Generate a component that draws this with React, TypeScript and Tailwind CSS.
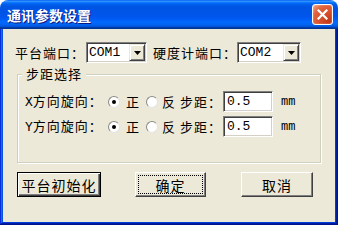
import React from "react";

function Radio({ checked }: { checked: boolean }) {
  return (
    <span className="relative inline-block w-[12px] h-[12px] shrink-0 rounded-full bg-white border border-t-[#8a8a8a] border-l-[#8a8a8a] border-b-[#e4e4e4] border-r-[#e4e4e4]">
      {checked && <span className="absolute left-[3px] top-[3px] w-[4px] h-[4px] rounded-full bg-black" />}
    </span>
  );
}

function DropBtn() {
  return (
    <div className="w-[16px] h-full flex items-center justify-center bg-[#ece9d8] border border-t-[#ece9d8] border-l-[#ece9d8] border-b-[#404040] border-r-[#404040] shadow-[inset_1px_1px_#ffffff,inset_-1px_-1px_#808080]">
      <svg width="7" height="4" viewBox="0 0 7 4">
        <polygon points="0,0 7,0 3.5,4" fill="#000" />
      </svg>
    </div>
  );
}

function Combo({ value, cls }: { value: string; cls: string }) {
  return (
    <div className={cls}>
      <div className="flex-1 h-full flex items-center pl-[1px] font-['Liberation_Mono',monospace] text-[13px] leading-none text-black">
        {value}
      </div>
      <DropBtn />
    </div>
  );
}

function Row({ axis }: { axis: string }) {
  return (
    <div className="flex items-center h-[21px] text-[13px] tracking-[1px] text-black">
      <span className="w-[83px] shrink-0 whitespace-nowrap">
        <span className="font-['Liberation_Mono',monospace] text-[13px] tracking-[0px]">{axis}</span>方向旋向：
      </span>
      <Radio checked />
      <span className="ml-[6px] w-[14px] shrink-0">正</span>
      <span className="ml-[6px] flex"><Radio checked={false} /></span>
      <span className="ml-[4px] w-[14px] shrink-0">反</span>
      <span className="ml-[4px] w-[42px] shrink-0 whitespace-nowrap">步距：</span>
      <div className="ml-[1px] w-[50px] h-[21px] shrink-0 bg-white border border-t-[#808080] border-l-[#808080] border-b-white border-r-white shadow-[inset_1px_1px_#404040,inset_-1px_-1px_#d4d0c8] flex items-center pl-[3px] font-['Liberation_Mono',monospace] text-[13px] tracking-[0px] leading-none">
        0.5
      </div>
      <span className="ml-[8px] font-['Liberation_Mono',monospace] text-[12px] tracking-[0px]">mm</span>
    </div>
  );
}

export default function App() {
  return (
    <div className="w-[338px] h-[225px] flex flex-col bg-white font-['Noto_Sans_CJK_SC',sans-serif] select-none">
      {/* Title bar */}
      <div className="h-[29px] shrink-0 rounded-t-[8px] flex items-center justify-between pl-[7px] pr-[5px] bg-[linear-gradient(to_bottom,#0058ee_0%,#3593ff_4%,#288eff_6%,#127dff_8%,#036ffc_10%,#0262ee_14%,#0057e5_20%,#0054e3_24%,#0055eb_56%,#005bf5_66%,#026afe_76%,#0062ef_86%,#0052d6_92%,#0040ab_94%,#003092_100%)]">
        <span className="text-white font-bold text-[14px] tracking-[0px] leading-none [text-shadow:1px_1px_#0a1883]">
          通讯参数设置
        </span>
        <div className="w-[21px] h-[21px] rounded-[3px] border border-white flex items-center justify-center bg-[radial-gradient(circle_at_85%_85%,#c2381a_0%,#d9522d_45%,#e0653f_70%,#f0a080_95%)] shadow-[inset_0_0_1px_#ffffff]">
          <svg width="11" height="11" viewBox="0 0 11 11">
            <path d="M1.5 1.5 L9.5 9.5 M9.5 1.5 L1.5 9.5" stroke="#ffffff" strokeWidth="2.2" strokeLinecap="square" />
          </svg>
        </div>
      </div>
      {/* Frame + body */}
      <div className="flex-1 flex px-[3px] pb-[3px] bg-[#0831d9] shadow-[inset_-1px_-1px_#00138c,inset_1px_0_#0831d9,inset_-2px_-2px_#001ea0,inset_2px_0_#166aee,inset_-3px_-3px_#003bda,inset_3px_0_#0855dd]">
        <div className="flex-1 bg-[#ece9d8] flex flex-col pt-[13px]">
          {/* Row 1 */}
          <div className="ml-[12px] flex items-center h-[21px] text-[13px] tracking-[1px] text-black">
            <span className="w-[71px] shrink-0 whitespace-nowrap">平台端口：</span>
            <Combo
              value="COM1"
              cls="w-[61px] h-[21px] shrink-0 flex bg-white border border-t-[#808080] border-l-[#808080] border-b-white border-r-white shadow-[inset_1px_1px_#404040,inset_-1px_-1px_#d4d0c8] p-[1px] pr-[1px] tracking-[0px]"
            />
            <span className="ml-[6px] w-[84px] shrink-0 whitespace-nowrap">硬度计端口：</span>
            <Combo
              value="COM2"
              cls="w-[64px] h-[21px] shrink-0 flex bg-white border border-t-[#808080] border-l-[#808080] border-b-white border-r-white shadow-[inset_1px_1px_#404040,inset_-1px_-1px_#d4d0c8] p-[1px] pr-[1px] tracking-[0px]"
            />
          </div>
          {/* Group box */}
          <div className="relative ml-[14px] mt-[11px] w-[304px] h-[89px] shrink-0 border border-[#d0d0bf] shadow-[inset_1px_1px_#ffffff,1px_1px_#ffffff] pt-[16px] pl-[7px] flex flex-col gap-[4px]">
            <span className="absolute left-[4px] top-[-9px] px-[4px] bg-[#ece9d8] text-[13px] tracking-[1px] leading-[16px] text-black">
              步距选择
            </span>
            <Row axis="X" />
            <Row axis="Y" />
          </div>
          {/* Buttons */}
          <div className="ml-[14px] mt-[9px] flex items-center text-[14px] tracking-[1px] text-black">
            <div className="w-[84px] h-[25px] shrink-0 flex items-center justify-center bg-[#ece9d8] border border-black shadow-[inset_1px_1px_#ffffff,inset_-1px_-1px_#404040,inset_-2px_-2px_#808080] leading-none">
              平台初始化
            </div>
            <div className="ml-[34px] w-[71px] h-[25px] shrink-0 relative flex items-center justify-center bg-[#ece9d8] border border-t-white border-l-white border-b-[#404040] border-r-[#404040] shadow-[inset_-1px_-1px_#808080] leading-none">
              <span className="absolute left-[2px] top-[2px] right-[2px] bottom-[2px] border border-dotted border-black" />
              确定
            </div>
            <div className="ml-[35px] w-[72px] h-[25px] shrink-0 flex items-center justify-center bg-[#ece9d8] border border-t-white border-l-white border-b-[#404040] border-r-[#404040] shadow-[inset_-1px_-1px_#808080] leading-none">
              取消
            </div>
          </div>
        </div>
      </div>
    </div>
  );
}
